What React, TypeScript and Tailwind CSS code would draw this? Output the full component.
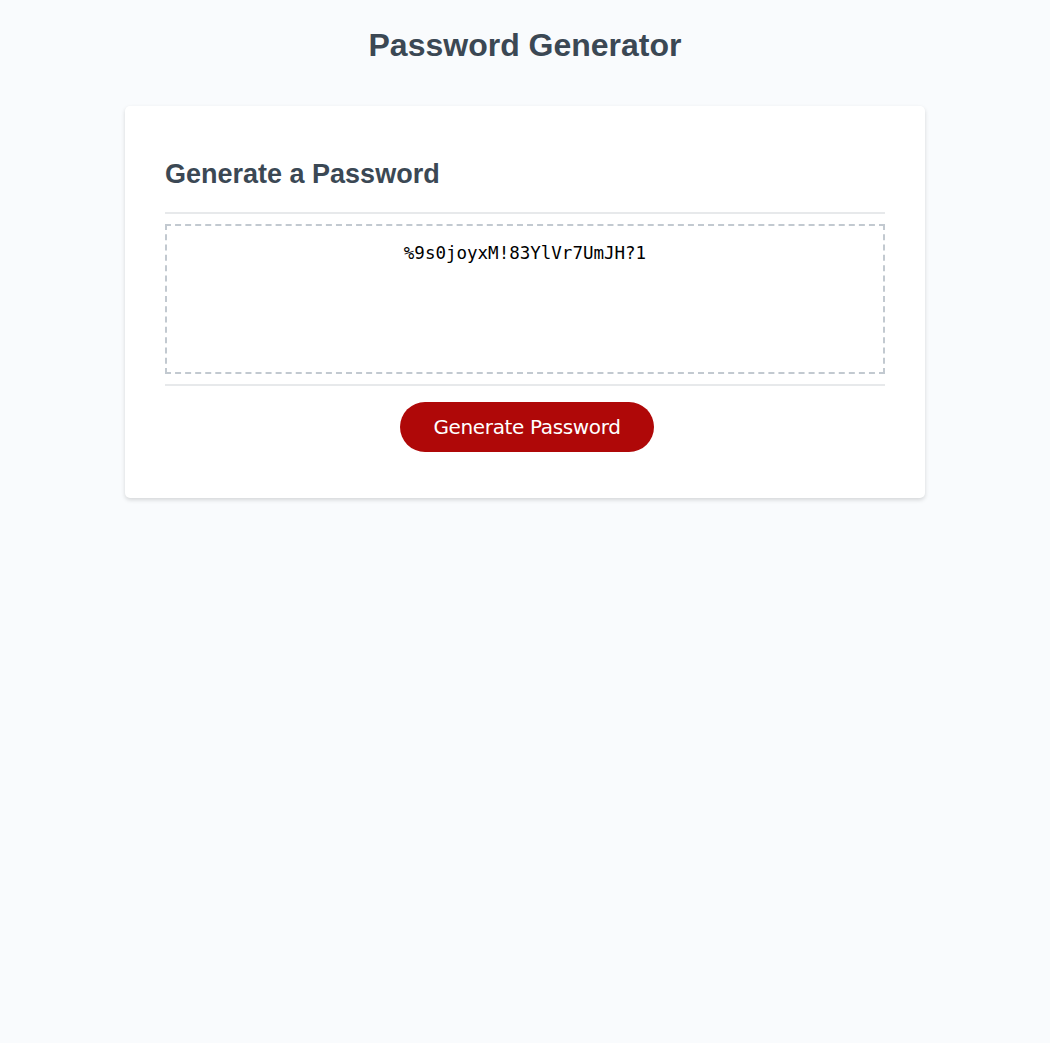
import React, { useState } from 'react';

const CHARS = 'ABCDEFGHIJKLMNOPQRSTUVWXYZabcdefghijklmnopqrstuvwxyz0123456789!%?#$&*';

const App: React.FC = () => {
  const [password, setPassword] = useState('%9s0joyxM!83YlVr7UmJH?1');

  const generate = () => {
    let out = '';
    for (let i = 0; i < 23; i++) out += CHARS[Math.floor(Math.random() * CHARS.length)];
    setPassword(out);
  };

  return (
    <div className="min-h-screen bg-[#f9fbfd] px-5 pt-[27px] font-['Liberation_Sans',Arial,sans-serif] text-[#3b4854]">
      <h1 className="text-center text-[32px] font-bold leading-[37px]">Password Generator</h1>

      <div className="mx-auto mt-[42px] max-w-[800px] rounded-[5px] bg-white px-10 pt-[30px] pb-[30px] shadow-[0_2px_4px_0_rgba(0,0,0,0.15)]">
        <div className="pt-[22px]">
          <h2 className="text-[27px] font-bold leading-[32px]">Generate a Password</h2>
          <div className="mt-[22px] h-[2px] w-full bg-[#e7e9eb]" />
        </div>

        <textarea
          readOnly
          value={password}
          className="my-[10px] block h-[150px] w-full resize-none border-2 border-dashed border-[#c2c9d0] px-4 pt-[17px] text-center font-['DejaVu_Sans_Mono',monospace] text-[17.5px] leading-[20px] text-black outline-none"
        />

        <div className="text-center">
          <div className="h-[2px] w-full bg-[#e7e9eb]" />
          <button
            onClick={generate}
            className="my-4 ml-5 mr-4 inline-flex h-[50px] w-[254px] items-center justify-center rounded-[25px] bg-[#af0808] font-['DejaVu_Sans',sans-serif] text-[20px] tracking-[-0.35px] text-white"
          >
            Generate Password
          </button>
        </div>
      </div>
    </div>
  );
};

export default App;
